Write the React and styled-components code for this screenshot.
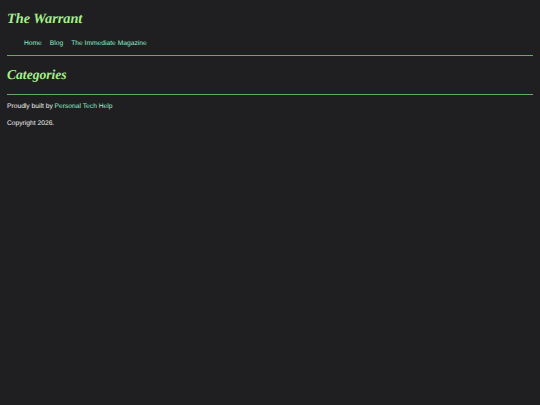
import React from 'react';
import styled, { createGlobalStyle } from 'styled-components';

const GlobalStyle = createGlobalStyle`
  html, body {
    margin: 0;
    background: #1f1f21;
    height: 100%;
  }
  body {
    font-family: "Liberation Sans", Arial, sans-serif;
    color: #f2f2f2;
    text-rendering: geometricPrecision;
  }
`;

const Page = styled.div`
  padding: 0 7px;
  min-height: 405px;
  box-sizing: border-box;
`;

const Header = styled.header`
  padding-top: 10px;
`;

const Title = styled.h1`
  margin: 0;
  font-family: "Liberation Serif", serif;
  font-style: italic;
  font-weight: 700;
  font-size: 14.3px;
  line-height: 18px;
  color: #a6f08a;
`;

const Nav = styled.ul`
  display: flex;
  gap: 8px;
  list-style: none;
  margin: 0;
  padding: 11px 0 6px 17px;
  line-height: 10px;
  font-size: 6.7px;
`;

const A = styled.a`
  color: #8ef0cc;
  text-decoration: none;
`;

const Rule = styled.div`
  height: 1px;
  background: #6aa866;
`;

const Heading = styled.h2`
  margin: 0;
  padding: 10px 0;
  font-family: "Liberation Serif", serif;
  font-style: italic;
  font-weight: 700;
  font-size: 13.6px;
  line-height: 18px;
  color: #a6f08a;
`;

const Line = styled.p`
  margin: 0;
  font-size: 6.7px;
  line-height: 10px;
  padding-top: ${(p) => p.$top}px;
`;

export default function App() {
  return (
    <Page>
      <GlobalStyle />
      <Header>
        <Title>The Warrant</Title>
        <Nav>
          <li><A href="#">Home</A></li>
          <li><A href="#">Blog</A></li>
          <li><A href="#">The Immediate Magazine</A></li>
        </Nav>
      </Header>
      <Rule />
      <Heading>Categories</Heading>
      <Rule />
      <Line $top={7}>Proudly built by <A href="#">Personal Tech Help</A></Line>
      <Line $top={7}>Copyright 2026.</Line>
    </Page>
  );
}
